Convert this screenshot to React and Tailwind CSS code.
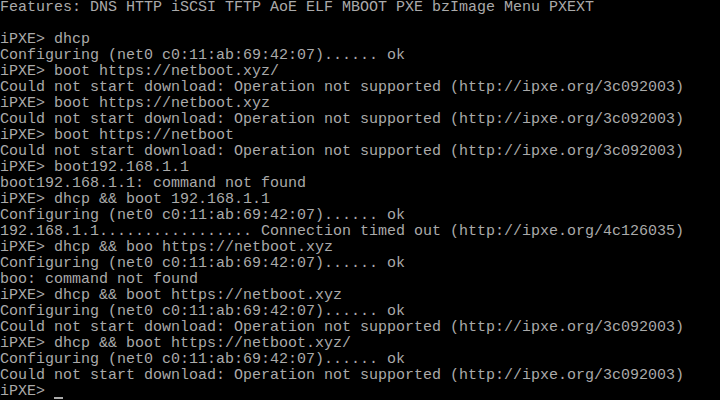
const lines = [
  "Features: DNS HTTP iSCSI TFTP AoE ELF MBOOT PXE bzImage Menu PXEXT",
  "",
  "iPXE> dhcp",
  "Configuring (net0 c0:11:ab:69:42:07)...... ok",
  "iPXE> boot https://netboot.xyz/",
  "Could not start download: Operation not supported (http://ipxe.org/3c092003)",
  "iPXE> boot https://netboot.xyz",
  "Could not start download: Operation not supported (http://ipxe.org/3c092003)",
  "iPXE> boot https://netboot",
  "Could not start download: Operation not supported (http://ipxe.org/3c092003)",
  "iPXE> boot192.168.1.1",
  "boot192.168.1.1: command not found",
  "iPXE> dhcp && boot 192.168.1.1",
  "Configuring (net0 c0:11:ab:69:42:07)...... ok",
  "192.168.1.1................. Connection timed out (http://ipxe.org/4c126035)",
  "iPXE> dhcp && boo https://netboot.xyz",
  "Configuring (net0 c0:11:ab:69:42:07)...... ok",
  "boo: command not found",
  "iPXE> dhcp && boot https://netboot.xyz",
  "Configuring (net0 c0:11:ab:69:42:07)...... ok",
  "Could not start download: Operation not supported (http://ipxe.org/3c092003)",
  "iPXE> dhcp && boot https://netboot.xyz/",
  "Configuring (net0 c0:11:ab:69:42:07)...... ok",
  "Could not start download: Operation not supported (http://ipxe.org/3c092003)",
];

export default function App() {
  return (
    <div
      className="w-[720px] h-[400px] bg-black text-[#aaaaaa] text-[15px] leading-[16px] overflow-hidden"
      style={{ fontFamily: '"Liberation Mono", "DejaVu Sans Mono", monospace' }}
    >
      {lines.map((l, i) => (
        <div key={i} className="h-4 whitespace-pre">
          {l}
        </div>
      ))}
      <div className="h-4 whitespace-pre flex">
        <span>{"iPXE> "}</span>
        <span className="inline-block w-[9px] h-[15px] border-b-2 border-[#aaaaaa]"></span>
      </div>
    </div>
  );
}
